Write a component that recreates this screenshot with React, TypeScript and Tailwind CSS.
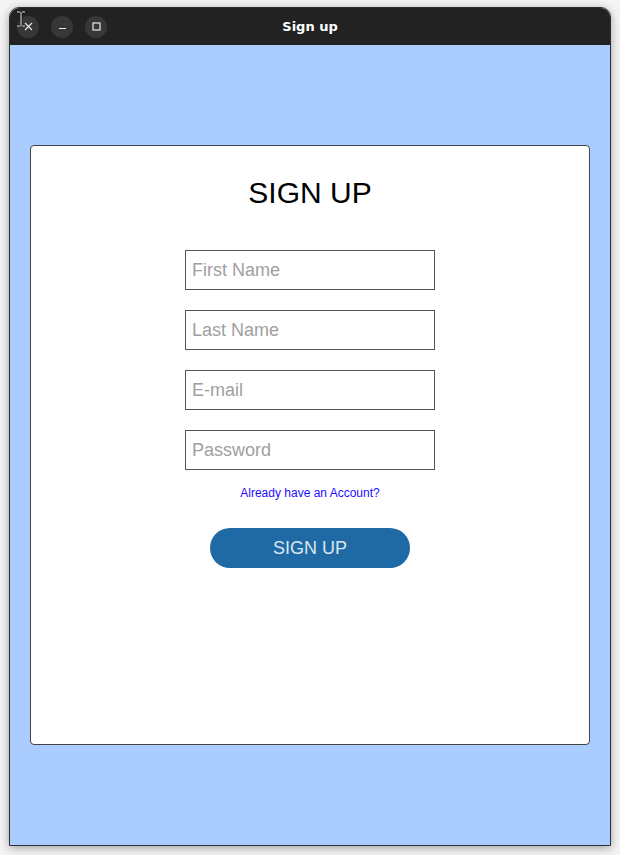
import React from 'react';

export default function App() {
  const fields = ['First Name', 'Last Name', 'E-mail', 'Password'];

  return (
    <div className="w-[620px] h-[855px] bg-[#f4f4f4] pt-[7px] pl-[9px]" style={{ fontFamily: '"Liberation Sans", Arial, sans-serif' }}>
      <div className="relative w-[602px] h-[839px] flex flex-col rounded-t-[10px] border border-[#2e2e2e] shadow-[0_2px_10px_rgba(0,0,0,0.35)] overflow-hidden">
        {/* title bar */}
        <div className="relative h-[37px] shrink-0 bg-[#222222] flex items-center px-[7px]">
          <div className="flex items-center gap-[12px]">
            <div className="w-[22px] h-[22px] rounded-full bg-[#373737] flex items-center justify-center">
              <svg width="9" height="9" viewBox="0 0 9 9">
                <path d="M1 1L8 8M8 1L1 8" stroke="#e8e8e8" strokeWidth="1.2" />
              </svg>
            </div>
            <div className="w-[22px] h-[22px] rounded-full bg-[#373737] flex items-center justify-center">
              <svg width="9" height="9" viewBox="0 0 9 9">
                <path d="M1 6.5H8" stroke="#e8e8e8" strokeWidth="1.2" />
              </svg>
            </div>
            <div className="w-[22px] h-[22px] rounded-full bg-[#373737] flex items-center justify-center">
              <svg width="9" height="9" viewBox="0 0 9 9">
                <rect x="1" y="1" width="7" height="7" fill="none" stroke="#e8e8e8" strokeWidth="1.2" />
              </svg>
            </div>
          </div>
          <div className="absolute inset-0 flex items-center justify-center text-white text-[13px] font-bold" style={{ fontFamily: '"DejaVu Sans", "Noto Sans", sans-serif' }}>
            Sign up
          </div>
          {/* mouse cursor */}
          <svg className="absolute left-[6px] top-[3px]" width="10" height="16" viewBox="0 0 10 16">
            <path d="M1 1H4M6 1H9M5 1V15M1 15H4M6 15H9" stroke="#000" strokeWidth="2.4" />
            <path d="M1 1H4M6 1H9M5 1V15M1 15H4M6 15H9" stroke="#fff" strokeWidth="1" />
          </svg>
        </div>

        {/* body */}
        <div className="flex-1 bg-[#aaccff] px-[20px] pt-[100px]">
          <div className="h-[600px] bg-white border border-[#444] rounded-[4px] flex flex-col items-center pt-[29px]">
            <h1 className="text-[30px] text-black leading-[36px]">SIGN UP</h1>
            <div className="mt-[39px] flex flex-col gap-[20px]">
              {fields.map((f) => (
                <input
                  key={f}
                  type={f === 'Password' ? 'password' : 'text'}
                  placeholder={f}
                  className="w-[250px] h-[40px] border border-[#555] px-[6px] text-[18px] text-black placeholder:text-[#a0a0a0] outline-none"
                />
              ))}
            </div>
            <a className="mt-[16px] text-[12px] text-[#1a0dff] leading-[15px]">Already have an Account?</a>
            <button className="mt-[27px] w-[200px] h-[40px] rounded-full bg-[#1f6aa5] text-[18px] text-[#dce6f0]">
              SIGN UP
            </button>
          </div>
        </div>
      </div>
    </div>
  );
}
